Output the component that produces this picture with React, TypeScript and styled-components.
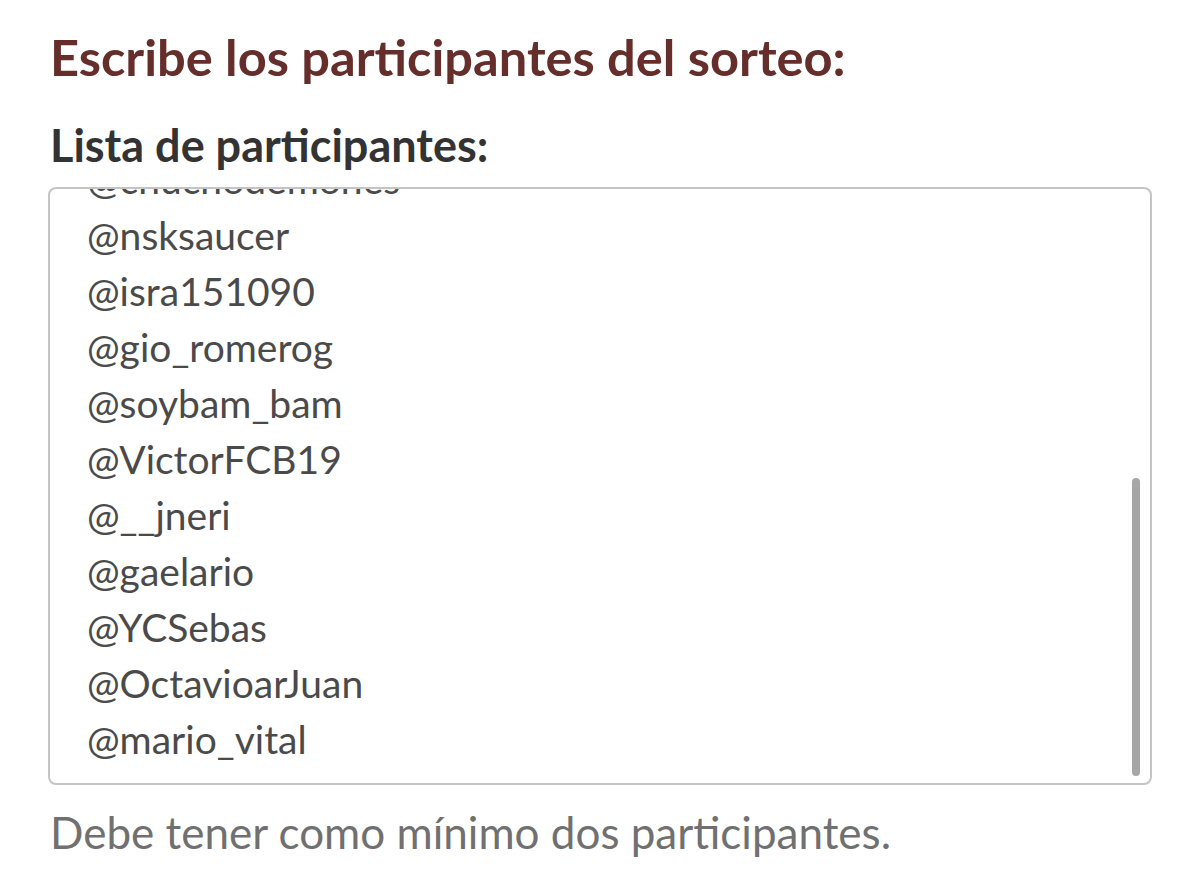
import styled, { createGlobalStyle } from "styled-components";

const GlobalStyle = createGlobalStyle`
body {
    margin: 0;
    background: #ffffff;
    font-family: Lato, "Open Sans", sans-serif;
}
`;

const Page = styled.div`
display: flex;
flex-direction: column;
padding: 27px 48px 0 48px;
width: 1200px;
box-sizing: border-box;
`;

const Title = styled.h2`
margin: 0 0 0 2px;
font-size: 50.6px;
line-height: 60px;
font-weight: 700;
color: #652e2b;
`;

const Label = styled.label`
margin: 32px 0 0 2px;
font-size: 45px;
line-height: 52px;
font-weight: 700;
color: #333333;
`;

const Box = styled.div`
position: relative;
margin-top: 16px;
height: 598px;
width: 1104px;
box-sizing: border-box;
border: 2px solid #c4c4c4;
border-radius: 8px;
background: #ffffff;
overflow: hidden;
`;

const Lines = styled.ul`
list-style: none;
margin: -38px 0 0 0;
padding: 0 0 0 37px;
`;

const Line = styled.li`
height: 56px;
line-height: 56px;
font-size: 39px;
color: #4a4a4a;
white-space: nowrap;
`;

const Thumb = styled.div`
position: absolute;
right: 10px;
top: 289px;
width: 8px;
height: 298px;
border-radius: 4px;
background: #a6a6a6;
`;

const Hint = styled.p`
margin: 22px 0 0 2px;
font-size: 44px;
line-height: 50px;
color: #707070;
`;

const participants = [
    "@chuchodemones",
    "@nsksaucer",
    "@isra151090",
    "@gio_romerog",
    "@soybam_bam",
    "@VictorFCB19",
    "@__jneri",
    "@gaelario",
    "@YCSebas",
    "@OctavioarJuan",
    "@mario_vital",
];

export default function App() {
    return (
        <>
            <GlobalStyle />
            <Page>
                <Title>Escribe los participantes del sorteo:</Title>
                <Label>Lista de participantes:</Label>
                <Box>
                    <Lines>
                        {participants.map((p) => (
                            <Line key={p}>{p}</Line>
                        ))}
                    </Lines>
                    <Thumb />
                </Box>
                <Hint>Debe tener como mínimo dos participantes.</Hint>
            </Page>
        </>
    );
}
